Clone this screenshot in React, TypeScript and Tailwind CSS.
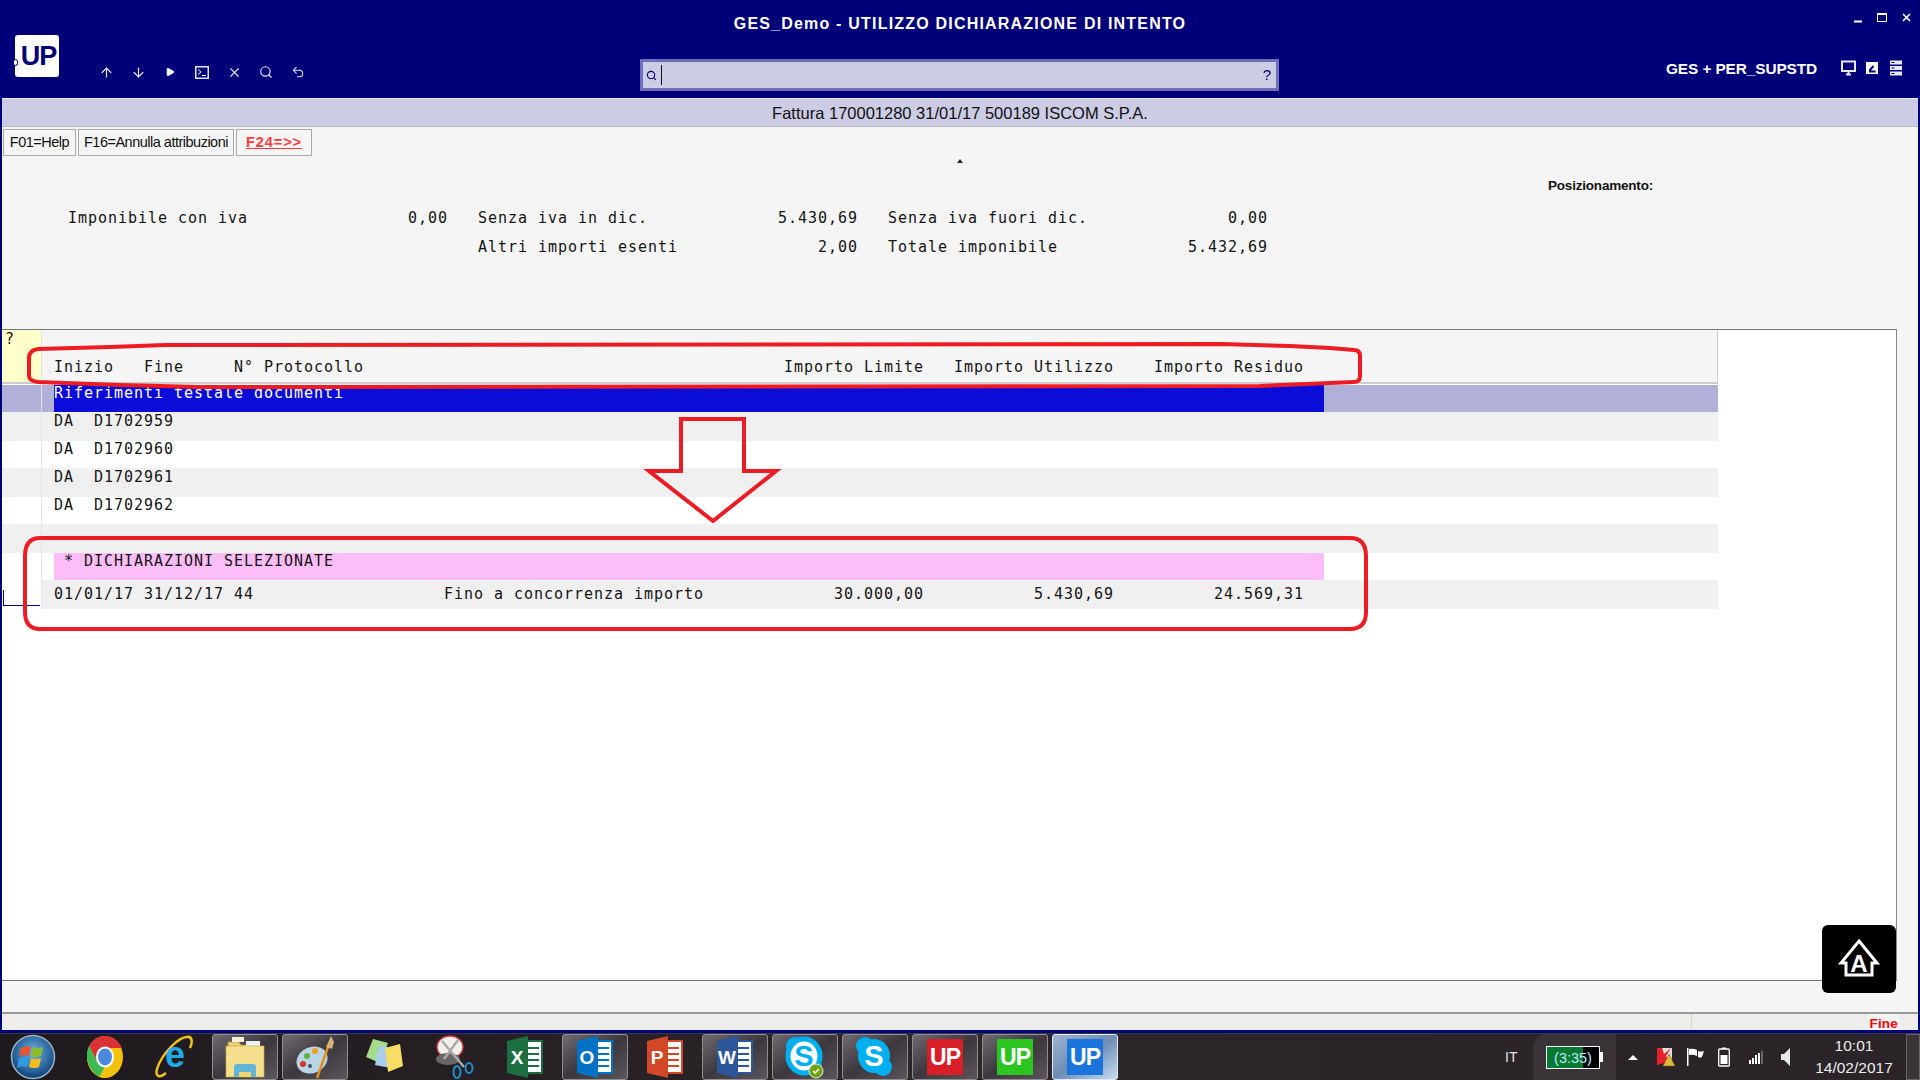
import React from 'react';
import { ArrowUp, ArrowDown, Play, X, Search, Undo2 } from 'lucide-react';

const mono = "font-['DejaVu_Sans_Mono','Liberation_Mono',monospace] text-[15px] tracking-[0.97px] leading-4 whitespace-pre text-[#141414]";
const ui = "font-['Liberation_Sans',Arial,sans-serif]";

const rows = [
  { bg: 'bg-[#f0f0f0]', h: 'h-[29px]', pad: 'pt-[1px]', text: 'DA  D1702959' },
  { bg: 'bg-white', h: 'h-[27px]', pad: 'pt-0', text: 'DA  D1702960' },
  { bg: 'bg-[#f0f0f0]', h: 'h-[29px]', pad: 'pt-[1px]', text: 'DA  D1702961' },
  { bg: 'bg-white', h: 'h-[27px]', pad: 'pt-0', text: 'DA  D1702962' },
  { bg: 'bg-[#f0f0f0]', h: 'h-[29px]', pad: 'pt-0', text: '' },
];

function ToolIcon({ children }: { children: React.ReactNode }) {
  return <div className="w-8 h-5 flex items-center justify-center text-[#e4e4f6]">{children}</div>;
}

function TaskSlot({ active, pressed, children }: { active?: boolean; pressed?: boolean; children: React.ReactNode }) {
  const look = active
    ? 'bg-gradient-to-br from-[#9fb4d0] via-[#6e8db5] to-[#c6dcf2] border-[#dfeaf6]'
    : pressed
      ? 'bg-gradient-to-br from-[#6f6b70] via-[#3d383d] to-[#5a565b] border-[#918e91]'
      : 'border-transparent';
  return (
    <div className={`w-[66px] h-[46px] mr-1 rounded-[3px] border flex items-center justify-center shrink-0 ${look}`}>
      {children}
    </div>
  );
}

function UpTile({ color }: { color: string }) {
  return (
    <div className={`w-9 h-9 flex items-center justify-center text-white font-bold text-[23px] tracking-[-1px] ${ui} ${color}`}>UP</div>
  );
}

function Orb() {
  return (
    <svg width="46" height="46" viewBox="0 0 46 46">
      <defs>
        <radialGradient id="orb" cx="50%" cy="40%" r="60%">
          <stop offset="0%" stopColor="#6fb6e8" />
          <stop offset="100%" stopColor="#0d3f78" />
        </radialGradient>
      </defs>
      <circle cx="23" cy="23" r="21.5" fill="url(#orb)" stroke="#9db3c6" strokeWidth="1.5" />
      <path d="M11 14q5-3 10-1l-2 9q-5-2-10 0z" fill="#e8542d" />
      <path d="M23 13q5 2 10 0l-2 9q-5 2-10 0z" fill="#8cbc2c" />
      <path d="M9 24q5-2 10 0l-2 9q-5-2-10 1z" fill="#2f9be0" />
      <path d="M21 24q5 2 10 0l-2 9q-5 2-10 0z" fill="#f5bd1f" />
    </svg>
  );
}

function Chrome() {
  return (
    <svg width="38" height="44" viewBox="0 0 38 44">
      <ellipse cx="19" cy="22" rx="18" ry="21" fill="#f4c20d" />
      <path d="M19 1C12 1 6 5 3 11l8 15 8-13h17C33 6 27 1 19 1z" fill="#db3236" />
      <path d="M3 11C-1 19 0 32 13 42l8-14-10-2z" fill="#3cba54" />
      <ellipse cx="19" cy="22" rx="9" ry="10.5" fill="#fff" />
      <ellipse cx="19" cy="22" rx="7" ry="8.5" fill="#4a89dc" />
    </svg>
  );
}

function IeIcon() {
  return (
    <svg width="40" height="44" viewBox="0 0 40 44">
      <path d="M33 2C25 2 8 18 3 34c-2 7 2 10 9 4" fill="none" stroke="#f2c21a" strokeWidth="2.5" />
      <path d="M33 2c5-1 6 5 3 11" fill="none" stroke="#f2c21a" strokeWidth="2.5" />
      <text x="21" y="32" textAnchor="middle" fontFamily="Liberation Sans" fontWeight="700" fontSize="36" fill="#1fa9e6">e</text>
    </svg>
  );
}

function FolderIcon() {
  return (
    <svg width="40" height="42" viewBox="0 0 40 42">
      <path d="M3 6h11l2 3h14v4H3z" fill="#e9d07a" stroke="#b9983f" strokeWidth="0.7" />
      <rect x="7" y="1" width="12" height="5" fill="#f4f0dd" />
      <rect x="21" y="5" width="14" height="6" fill="#e9f1f5" />
      <rect x="1" y="10" width="38" height="31" fill="#f6e08f" stroke="#c9a94c" strokeWidth="0.7" />
      <path d="M9 41V31q0-3 3-3h16q3 0 3 3v10h-5v-5H14v5z" fill="#61b6d8" />
      <rect x="14" y="36" width="12" height="5" fill="#f0d36e" />
    </svg>
  );
}

function PaintIcon() {
  return (
    <svg width="40" height="44" viewBox="0 0 40 44">
      <ellipse cx="17" cy="25" rx="16" ry="13" fill="#b9d4e4" transform="rotate(-25 17 25)" />
      <circle cx="8" cy="29" r="3" fill="#d9352f" />
      <circle cx="12" cy="21" r="3" fill="#5cb03f" />
      <circle cx="20" cy="16" r="3" fill="#f0a020" />
      <circle cx="15" cy="31" r="2" fill="#44505a" />
      <path d="M22 43 33 12" stroke="#e48f22" strokeWidth="2.5" />
      <path d="M31 12 36 1l3 6-2 7z" fill="#d8b27a" />
    </svg>
  );
}

function NotesIcon() {
  return (
    <svg width="38" height="36" viewBox="0 0 38 36">
      <path d="M7 0 22 4 14 24 0 18z" fill="#a5dc8a" />
      <path d="M13 7 27 9 25 29 9 26z" fill="#a8cdf0" />
      <path d="M19 9 34 5 37 27 22 33z" fill="#f7dc66" />
    </svg>
  );
}

function SnipIcon() {
  return (
    <svg width="38" height="44" viewBox="0 0 38 44">
      <ellipse cx="14" cy="12" rx="13" ry="11" fill="#f4f0ee" stroke="#c83a3a" strokeWidth="1.5" />
      <ellipse cx="12" cy="24" rx="12" ry="6" fill="#6b6468" />
      <path d="M6 6 28 32M22 5 8 24" stroke="#a8a8a8" strokeWidth="2.5" />
      <ellipse cx="33" cy="33" rx="3.5" ry="5" fill="none" stroke="#1f90cf" strokeWidth="2" />
      <ellipse cx="21" cy="37" rx="3.5" ry="6" fill="none" stroke="#1f90cf" strokeWidth="2" />
    </svg>
  );
}

function DocIcon({ color, letter, lines }: { color: string; letter: string; lines: string }) {
  return (
    <svg width="36" height="42" viewBox="0 0 36 42">
      <rect x="16" y="5" width="19" height="32" fill="#fff" stroke={color} strokeWidth="2" />
      <path d="M19 12h13M19 18h13M19 24h13M19 30h13" stroke={lines} strokeWidth="2" />
      <path d="M0 5 21 0v42L0 37z" fill={color} />
      <text x="10" y="28" textAnchor="middle" fontFamily="Liberation Sans" fontWeight="700" fontSize="19" fill="#fff">{letter}</text>
    </svg>
  );
}

function SkypeIcon({ badge }: { badge?: boolean }) {
  return (
    <svg width="40" height="44" viewBox="0 0 40 44">
      <circle cx="10" cy="11" r="9" fill="#00aff0" />
      <circle cx="28" cy="32" r="9" fill="#00aff0" />
      <ellipse cx="19" cy="21" rx="16" ry="17" fill={badge ? '#fff' : '#00aff0'} stroke="#00aff0" strokeWidth={badge ? 5 : 0} />
      <text x="19" y="31" textAnchor="middle" fontFamily="Liberation Sans" fontWeight="700" fontSize="29" fill={badge ? '#00aff0' : '#fff'}>S</text>
      {badge && <circle cx="31" cy="36" r="7" fill="#6ea50f" stroke="#e8e8e8" />}
      {badge && <path d="m28 36 2 2 4-4" stroke="#fff" strokeWidth="1.5" fill="none" />}
    </svg>
  );
}

export default function App() {
  return (
    <div className="relative w-screen h-screen overflow-hidden bg-[#000078] flex flex-col">
      {/* title + toolbar */}
      <header className="h-[98px] shrink-0 text-white">
        <div className="h-[35px] grid grid-cols-[1fr_auto_1fr]">
          <div />
          <h1 className={`${ui} font-bold text-[16px] pt-[15px] leading-[18px] tracking-[1.2px]`}>GES_Demo - UTILIZZO DICHIARAZIONE DI INTENTO</h1>
          <div className="flex justify-end items-start pt-[13px] pr-[8px]">
            <svg width="58" height="10" viewBox="0 0 58 10" fill="none" stroke="white">
              <path d="M0 8.5h8" strokeWidth="2" />
              <path d="M23.5 1.5h9v7h-9z" strokeWidth="1" />
              <path d="M23 1h10" strokeWidth="2" />
              <path d="M49 1l7 7M56 1l-7 7" strokeWidth="1.6" />
            </svg>
          </div>
        </div>
        <div className="h-[63px] flex items-start">
          <div className="relative ml-[15px] w-[44px] h-[42px] bg-white rounded-[3px] flex items-center justify-center">
            <span className={`${ui} font-bold text-[27px] text-[#000078] tracking-[-1px] pl-[3px]`}>UP</span>
            <span className="absolute left-[-2px] top-[24px] w-[5px] h-[7px] rounded-full bg-white border border-[#000078]" />
          </div>
          <div className="flex ml-[31px] mt-[27px]">
            <ToolIcon><ArrowUp size={15} strokeWidth={2} /></ToolIcon>
            <ToolIcon><ArrowDown size={15} strokeWidth={2} /></ToolIcon>
            <ToolIcon><Play size={10} fill="white" /></ToolIcon>
            <ToolIcon>
              <svg width="14" height="13" viewBox="0 0 14 13" fill="none" stroke="#e4e4f6">
                <path d="M.75.75h12.5v11.5H.75z" strokeWidth="1.5" />
                <path d="M3 3.5l3 2.5-3 2.5M7 9.5h4" strokeWidth="1" stroke="white" />
              </svg>
            </ToolIcon>
            <ToolIcon><X size={15} strokeWidth={1.8} /></ToolIcon>
            <ToolIcon><Search size={14} strokeWidth={2} /></ToolIcon>
            <ToolIcon><Undo2 size={14} strokeWidth={1.8} /></ToolIcon>
          </div>
          <div className="ml-[326px] mt-[24px] w-[639px] h-[32px] bg-[#cccce4] border-[3px] border-[#7070b8] flex items-center text-[#000078]">
            <Search size={11} strokeWidth={2.4} className="ml-[3px]" />
            <span className="ml-[4px] w-px h-[20px] bg-[#111]" />
            <span className={`${ui} ml-auto mr-[5px] text-[15px]`}>?</span>
          </div>
          <div className={`${ui} ml-[387px] mt-[24px] font-bold text-[15.4px] leading-5 tracking-[-0.1px]`}>GES + PER_SUPSTD</div>
          <svg className="ml-[24px] mt-[25px]" width="62" height="16" viewBox="0 0 62 16" fill="none" stroke="#e8e8f8">
            <path d="M1 1.5h13v9.5H1z" strokeWidth="2" />
            <path d="M5 14.5h5M7.5 11v3" strokeWidth="2" />
            <rect x="25" y="2" width="12" height="12" fill="white" stroke="none" />
            <path d="M28 11.5h6.5M28.5 10.5l4-4.5" stroke="#000078" strokeWidth="2" />
            <rect x="49" y="0.5" width="12" height="4" fill="#e8e8f8" stroke="none" />
            <rect x="49" y="6" width="12" height="4" fill="#e8e8f8" stroke="none" />
            <rect x="49" y="11.5" width="12" height="4" fill="#e8e8f8" stroke="none" />
            <path d="M50.5 2.5h3M50.5 8h3M50.5 13.5h3" stroke="#000078" />
          </svg>
        </div>
      </header>

      {/* page */}
      <main className="mx-[2px] h-[932px] shrink-0 flex flex-col bg-[#f5f5f5]">
        <div className={`${ui} h-[29px] shrink-0 bg-[#ccccE4] border-t border-b border-t-[#e8e8e8] border-b-[#bcbcbc] text-center text-[16.5px] leading-[28px] text-[#111]`}>
          Fattura 170001280 31/01/17 500189 ISCOM S.P.A.
        </div>
        <div className={`${ui} flex h-[27px] mt-[2px] ml-[1px] gap-[2px] shrink-0 text-[14.5px] tracking-[-0.5px] text-[#111]`}>
          <button className="w-[73px] border border-[#aaa] bg-[#f5f5f5] whitespace-nowrap">F01=Help</button>
          <button className="w-[156px] border border-[#aaa] bg-[#f5f5f5] whitespace-nowrap">F16=Annulla attribuzioni</button>
          <button className="w-[76px] border border-[#aaa] bg-[#f5f5f5] font-bold text-[#ff3b3b] underline tracking-[0.9px]">F24=&gt;&gt;</button>
        </div>

        <div className="h-[173px] shrink-0">
          <div className="h-[7px] flex justify-center items-end">
            <span className="w-0 h-0 border-l-[3px] border-r-[3px] border-b-[4px] border-l-transparent border-r-transparent border-b-[#222]" />
          </div>
          <div className={`${ui} mt-[15px] ml-[1546px] font-bold text-[13.5px] leading-4 tracking-[-0.2px] text-[#111]`}>Posizionamento:</div>
          <div className={`${mono} mt-[16px] ml-[66px]`}>
            {'Imponibile con iva                0,00   Senza iva in dic.             5.430,69   Senza iva fuori dic.              0,00'}
          </div>
          <div className={`${mono} mt-[13px] ml-[66px]`}>
            {'                                         Altri importi esenti              2,00   Totale imponibile             5.432,69'}
          </div>
        </div>

        {/* grid */}
        <section className="h-[652px] w-[1895px] shrink-0 bg-white border-t border-b border-r border-t-[#777] border-b-[#777] border-r-[#888]">
          <div className="w-[1716px] flex h-[54px] border-b-2 border-[#ccc] border-r border-r-[#ccc] bg-[#f5f5f5]">
            <div className={`${mono} w-[39px] bg-[#ffffcc] pl-[3px] pt-[1px]`}>?</div>
            <div className="w-px bg-[#e2e2e2]" />
            <div className={`${mono} pl-[12px] pt-[29px]`}>
              {'Inizio   Fine     N° Protocollo                                          Importo Limite   Importo Utilizzo    Importo Residuo'}
            </div>
          </div>
          <div className="w-[1716px] flex h-[27px] mt-px bg-[#b0b0d8]">
            <div className="w-[39px]" />
            <div className="w-px bg-[#e2e2e2]" />
            <div className={`${mono} !text-white ml-[12px] w-[1270px] h-[27px] bg-[#0c0cd8]`}>Riferimenti testale documenti</div>
          </div>
          {rows.map((row, i) => (
            <div key={i} className={`w-[1716px] flex ${row.h} ${row.bg}`}>
              <div className={`w-[39px] ${row.bg}`} />
              <div className="w-px bg-[#e6e6e6]" />
              <div className={`${mono} pl-[12px] ${row.pad}`}>{row.text}</div>
            </div>
          ))}
          <div className="w-[1716px] flex h-[27px] bg-white">
            <div className="w-[39px]" />
            <div className="w-px bg-[#e6e6e6]" />
            <div className={`${mono} ml-[12px] w-[1270px] h-[27px] bg-[#fdbdf9]`}>{' * DICHIARAZIONI SELEZIONATE'}</div>
          </div>
          <div className="w-[1716px] flex h-[29px] bg-[#f0f0f0]">
            <div className="relative w-[39px] bg-white">
              <span className="absolute left-[1px] top-[10px] w-[37px] h-[16px] border-l border-b border-[#000078]" />
            </div>
            <div className="w-px bg-[#e6e6e6]" />
            <div className={`${mono} pl-[12px] pt-[6px]`}>
              {'01/01/17 31/12/17 44                   Fino a concorrenza importo             30.000,00           5.430,69          24.569,31'}
            </div>
          </div>
        </section>

        <div className="h-[31px] shrink-0" />
        <footer className={`${ui} flex flex-1 border-t-2 border-[#999] bg-[#efecec] overflow-hidden`}>
          <div className="w-[1690px] border-r border-[#d8d8d8]" />
          <div className="flex-1 flex justify-end pr-[19px]">
            <span className="h-[17px] bg-[#f5f5f5] px-[1px] font-bold text-[13.5px] leading-[20px] tracking-[0.2px] text-[#ff0000]">Fine</span>
          </div>
        </footer>
      </main>

      {/* windows taskbar */}
      <div className="mt-[3px] h-[47px] shrink-0 flex items-center bg-gradient-to-r from-[#1f1a1e] via-[#2c2529] to-[#2a2428] border-t border-[#3a3a3a] text-white">
        <div className="w-[67px] ml-[10px] flex justify-start shrink-0"><Orb /></div>
        <div className="w-[62px] flex justify-center -ml-[3px] shrink-0"><Chrome /></div>
        <div className="w-[76px] flex justify-center shrink-0"><IeIcon /></div>
        <TaskSlot pressed><FolderIcon /></TaskSlot>
        <TaskSlot pressed><PaintIcon /></TaskSlot>
        <TaskSlot><NotesIcon /></TaskSlot>
        <TaskSlot><SnipIcon /></TaskSlot>
        <TaskSlot><DocIcon color="#1d6f42" letter="X" lines="#1d6f42" /></TaskSlot>
        <TaskSlot pressed><DocIcon color="#0072c6" letter="O" lines="#0072c6" /></TaskSlot>
        <TaskSlot><DocIcon color="#d24726" letter="P" lines="#d24726" /></TaskSlot>
        <TaskSlot pressed><DocIcon color="#2b579a" letter="W" lines="#2b579a" /></TaskSlot>
        <TaskSlot pressed><SkypeIcon badge /></TaskSlot>
        <TaskSlot pressed><SkypeIcon /></TaskSlot>
        <TaskSlot pressed><UpTile color="bg-[#d81e26]" /></TaskSlot>
        <TaskSlot pressed><UpTile color="bg-[#2cc51f]" /></TaskSlot>
        <TaskSlot active><UpTile color="bg-[#1a74dc]" /></TaskSlot>

        <div className={`${ui} ml-[383px] w-[28px] text-[14px] text-[#e4e4e4] shrink-0`}>IT</div>
        <div className="h-full w-[83px] rounded-tl-[14px] bg-[#3a3438] flex items-center justify-center shrink-0">
          <div className="relative w-[54px] h-[23px] border border-white bg-black overflow-hidden">
            <div className="absolute inset-y-0 left-0 w-[36px] bg-[#067a30]" />
            <div className={`${ui} relative text-center text-[14.5px] leading-[22px] text-[#bfe9ff]`}>(3:35)</div>
          </div>
          <div className="w-[3px] h-[10px] bg-white" />
        </div>
        <div className="flex items-center shrink-0 text-white">
          <span className="ml-[12px] w-0 h-0 border-l-[5px] border-r-[5px] border-b-[5px] border-l-transparent border-r-transparent border-b-white" />
          <svg className="ml-[18px]" width="20" height="20" viewBox="0 0 20 20">
            <rect x="1" y="1" width="15" height="15" fill="#e0e0e0" />
            <path d="M1 1h5l2 6 7-6-5 8 5 7H8L1 18z" fill="#e6202c" />
            <path d="m13 7 6 12H7z" fill="#e3b93c" stroke="#6b5a22" strokeWidth="0.6" />
          </svg>
          <svg className="ml-[11px]" width="18" height="20" viewBox="0 0 18 20" fill="white">
            <rect x="0" y="1" width="1.5" height="18" />
            <path d="M2 2q4-1 8 1v6q-4-2-8-1zM11 4q3 1 6 0l-2 6q-2 1-4 0z" />
          </svg>
          <svg className="ml-[13px]" width="12" height="20" viewBox="0 0 12 20">
            <rect x="0.7" y="2" width="10.6" height="17" rx="1" fill="none" stroke="white" strokeWidth="1.3" />
            <rect x="4" y="0.5" width="4" height="1.5" fill="white" />
            <rect x="2.5" y="8" width="7" height="9" fill="white" />
          </svg>
          <svg className="ml-[19px]" width="16" height="14" viewBox="0 0 16 14" fill="white">
            <rect x="0" y="10" width="2" height="4" />
            <rect x="3" y="8" width="2" height="6" />
            <rect x="6" y="5" width="2" height="9" />
            <rect x="9" y="3" width="2" height="11" />
            <rect x="12" y="1" width="2" height="13" fill="#666" />
          </svg>
          <svg className="ml-[16px]" width="10" height="18" viewBox="0 0 10 18" fill="#e8e8e8">
            <path d="M0 6h3l6-6v18l-6-6H0z" />
          </svg>
        </div>
        <div className={`${ui} ml-[19px] w-[88px] text-center text-[15.5px] leading-[22px] text-[#ececec] shrink-0`}>
          <div>10:01</div>
          <div>14/02/2017</div>
        </div>
        <div className="ml-[8px] h-full w-[14px] border border-[#666] bg-[#3a3438] shrink-0" />
      </div>

      {/* freehand notes on top of the screen */}
      <svg className="absolute inset-0 pointer-events-none" width="1920" height="1080" fill="none" stroke="#ed1c24" strokeWidth="4">
        <path d="M165 345 L1221 344 L1290 346 L1330 348 L1354 350 Q1360 350 1360 356 L1360 376 Q1360 382 1354 382 L1330 383 L1260 386 L200 387 L120 385 L38 382 Q29 381 29 376 L29 358 Q29 350 38 349 L110 347 Z" />
        <path d="M40 538 H1350 Q1366 538 1366 556 V612 Q1366 629 1350 629 H40 Q25 629 25 612 V556 Q25 538 40 538 Z" />
        <path d="M681 419 H744 V471 H776 L713 521 L649 471 H681 Z" />
      </svg>

      <div className="absolute left-[1822px] top-[925px] w-[74px] h-[68px] bg-black rounded-[6px] flex items-center justify-center">
        <svg width="44" height="42" viewBox="0 0 44 42" fill="none" stroke="white" strokeWidth="3">
          <path d="M22 3 40 25H35V37H9V25H4Z" />
          <text x="22" y="34" textAnchor="middle" fontFamily="Liberation Sans" fontWeight="700" fontSize="24" fill="white" stroke="none">A</text>
        </svg>
      </div>
    </div>
  );
}
